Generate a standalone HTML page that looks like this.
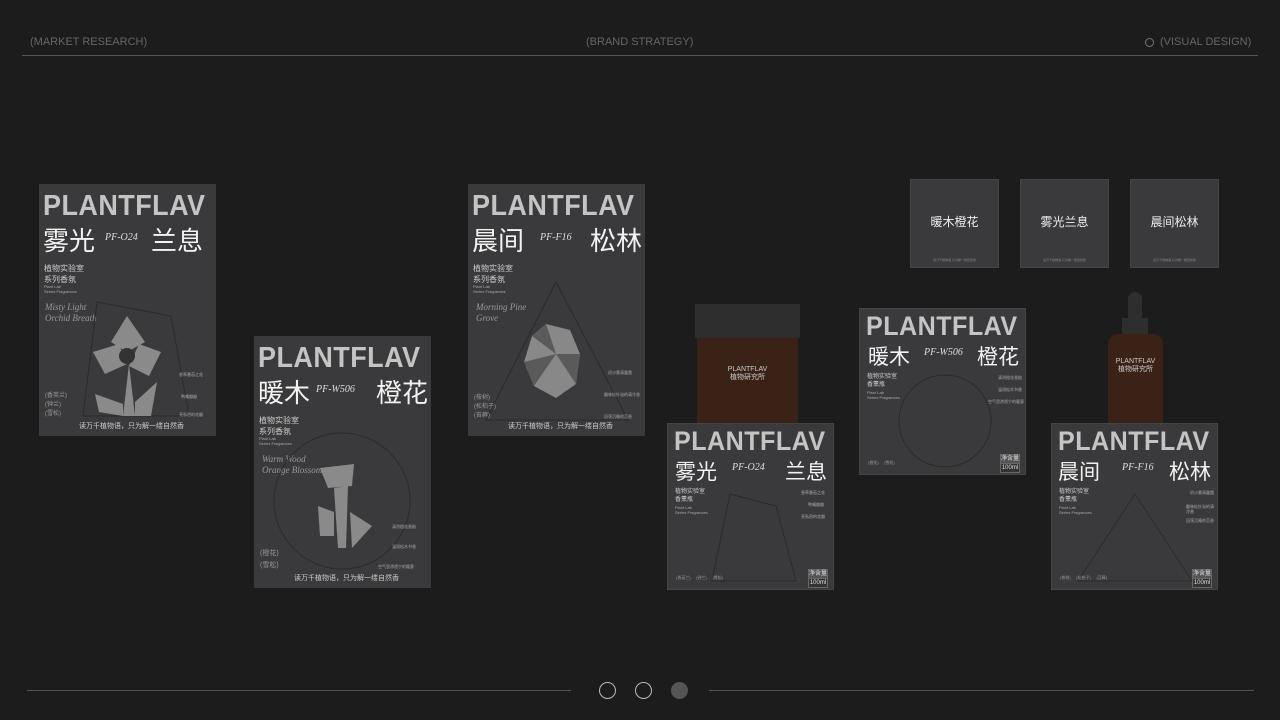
<!DOCTYPE html>
<html><head><meta charset="utf-8"><style>
*{margin:0;padding:0;box-sizing:border-box}
body{width:1280px;height:720px;background:#1c1c1c;position:relative;overflow:hidden;font-family:"Liberation Sans","Noto Sans CJK SC",sans-serif;color:#ddd}
.a{position:absolute}
.hd{top:36px;font-size:11px;color:#666}
.card{position:absolute;background:#3a3a3c;overflow:hidden}
.t{position:absolute;left:4px;top:6px;font-size:29px;color:#c4c4c4;font-weight:bold;letter-spacing:0.5px;white-space:nowrap;transform:scaleX(0.93);transform-origin:left}
.cn{position:absolute;font-size:26px;color:#f2f2f2;white-space:nowrap}
.code{position:absolute;font-family:"Liberation Serif",serif;font-style:italic;font-size:10px;color:#ddd}
.s{position:absolute;font-size:8px;color:#ccc;line-height:11px}
.xs{position:absolute;font-size:4px;color:#aaa;line-height:5px}
.g{position:absolute;font-size:6px;color:#999;line-height:9px}
.net{position:absolute;font-size:6px;color:#ddd;background:#555;text-align:center;width:20px;line-height:8px;border:1px solid #666}
.sq{position:absolute;background:#3a3a3c;width:89px;height:89px;border:1px solid #444}
.sq .c{position:absolute;top:33px;width:100%;text-align:center;font-size:12px;color:#eee}
.sq .f{position:absolute;top:78px;width:100%;text-align:center;font-size:3px;color:#888}
</style></head><body>
<div class="a hd" style="left:30px">(MARKET RESEARCH)</div>
<div class="a hd" style="left:586px">(BRAND STRATEGY)</div>
<div class="a" style="left:1145px;top:38px;width:9px;height:9px;border:1px solid #777;border-radius:50%"></div>
<div class="a hd" style="left:1160px">(VISUAL DESIGN)</div>
<div class="a" style="left:22px;top:55px;width:1236px;height:1px;background:#555"></div>

<!-- poster A -->
<div class="card" style="left:39px;top:184px;width:177px;height:252px">
<div class="t">PLANTFLAV</div>
<div class="cn" style="left:4px;top:37px">雾光</div>
<div class="code" style="left:66px;top:48px">PF-O24</div>
<div class="cn" style="left:112px;top:37px">兰息</div>
<div class="s" style="left:5px;top:79px">植物实验室<br>系列香氛</div>
<div class="xs" style="left:5px;top:100px">Plant Lab<br>Series Fragrances</div>
<div class="code" style="left:6px;top:118px;color:#999;font-size:9px;line-height:11px">Misty Light<br>Orchid Breath</div>
<svg class="a" style="left:0;top:0" width="177" height="252"><polygon points="58,118 132,132 150,232 44,232" fill="none" stroke="#2a2a2a"/>
<g fill="#8a8a8a"><polygon points="88,132 106,158 88,168 72,158"/><polygon points="54,168 80,160 88,180 66,190"/><polygon points="100,160 122,168 110,192 90,182"/><polygon points="90,180 96,232 84,232"/><polygon points="56,210 84,220 84,232 60,228"/><polygon points="96,218 118,198 112,232 96,232"/></g>
<circle cx="88" cy="172" r="8" fill="#333"/></svg>
<div class="g" style="left:6px;top:208px">(香英兰)<br>(钟兰)<br>(雪松)</div>
<div class="xs" style="left:140px;top:188px">香草番茄之花</div>
<div class="xs" style="left:142px;top:210px">鸭嘴瓣瓣</div>
<div class="xs" style="left:140px;top:228px">亮私密的花瓣</div>
<div class="s" style="left:40px;top:237px;font-size:7px">读万千植物语，只为解一缕自然香</div>
</div>

<!-- poster B -->
<div class="card" style="left:254px;top:336px;width:177px;height:252px">
<div class="t">PLANTFLAV</div>
<div class="cn" style="left:4px;top:37px">暖木</div>
<div class="code" style="left:62px;top:48px">PF-W506</div>
<div class="cn" style="left:122px;top:37px">橙花</div>
<div class="s" style="left:5px;top:79px">植物实验室<br>系列香氛</div>
<div class="xs" style="left:5px;top:100px">Plant Lab<br>Series Fragrances</div>
<div class="code" style="left:8px;top:118px;color:#999;font-size:9px;line-height:11px">Warm Wood<br>Orange Blossom</div>
<svg class="a" style="left:0;top:0" width="177" height="252"><circle cx="88" cy="165" r="68" fill="none" stroke="#2a2a2a"/>
<g fill="#8a8a8a"><polygon points="66,132 100,128 98,150 74,152"/><polygon points="80,152 94,150 92,212 84,212"/><polygon points="64,170 80,176 80,200 66,200"/><polygon points="96,176 118,190 98,212"/></g></svg>
<div class="g" style="left:6px;top:212px;font-size:7px;line-height:12px">(橙花)<br>(雪松)</div>
<div class="xs" style="left:138px;top:188px">清冽橙花香韵</div>
<div class="xs" style="left:138px;top:208px">温润松木书香</div>
<div class="xs" style="left:124px;top:228px">空气里渗透宁的暖意</div>
<div class="s" style="left:40px;top:237px;font-size:7px">读万千植物语，只为解一缕自然香</div>
</div>

<!-- poster C -->
<div class="card" style="left:468px;top:184px;width:177px;height:252px">
<div class="t">PLANTFLAV</div>
<div class="cn" style="left:4px;top:37px">晨间</div>
<div class="code" style="left:72px;top:48px">PF-F16</div>
<div class="cn" style="left:122px;top:37px">松林</div>
<div class="s" style="left:5px;top:79px">植物实验室<br>系列香氛</div>
<div class="xs" style="left:5px;top:100px">Plant Lab<br>Series Fragrances</div>
<div class="code" style="left:8px;top:118px;color:#999;font-size:9px;line-height:11px">Morning Pine<br>Grove</div>
<svg class="a" style="left:0;top:0" width="177" height="252"><polygon points="88,98 160,236 18,236" fill="none" stroke="#2a2a2a"/>
<g fill="#888"><polygon points="78,140 102,146 112,170 108,200 88,214 66,202 56,178 64,152"/></g><g fill="#5a5a5a"><polygon points="78,140 88,170 64,152"/><polygon points="88,170 112,170 108,200"/><polygon points="56,178 88,170 66,202"/></g></svg>
<div class="g" style="left:6px;top:210px">(桉树)<br>(松柏子)<br>(苔藓)</div>
<div class="xs" style="left:140px;top:186px">初沙雾清露霞</div>
<div class="xs" style="left:136px;top:208px">翻林松针溢的清冷香</div>
<div class="xs" style="left:136px;top:230px">回荡沉睡的苔香</div>
<div class="s" style="left:40px;top:237px;font-size:7px">读万千植物语，只为解一缕自然香</div>
</div>

<!-- jar -->
<div class="a" style="left:695px;top:304px;width:105px;height:34px;background:#2e2e2f"></div>
<div class="a" style="left:697px;top:338px;width:101px;height:86px;background:#3a2217">
<div style="position:absolute;top:28px;width:100%;text-align:center;font-size:7px;color:#ccc;line-height:8px">PLANTFLAV<br>植物研究所</div></div>

<!-- box O24 -->
<div class="card" style="left:667px;top:423px;width:167px;height:167px;border:1px solid #444">
<div class="t" style="font-size:27px;left:6px;top:2px">PLANTFLAV</div>
<div class="cn" style="left:7px;top:32px;font-size:21px">雾光</div>
<div class="code" style="left:64px;top:38px">PF-O24</div>
<div class="cn" style="left:117px;top:32px;font-size:21px">兰息</div>
<div class="s" style="left:7px;top:64px;font-size:6px;line-height:8px">植物实验室<br>香薰瓶</div>
<div class="xs" style="left:7px;top:81px">Plant Lab<br>Series Fragrances</div>
<svg class="a" style="left:0;top:0" width="167" height="167"><polygon points="62,70 108,82 128,157 44,157" fill="none" stroke="#2a2a2a"/></svg>
<div class="xs" style="left:133px;top:66px">香草番茄之花</div>
<div class="xs" style="left:140px;top:78px">鸭嘴瓣瓣</div>
<div class="xs" style="left:133px;top:90px">亮私密的花瓣</div>
<div class="g" style="left:8px;top:149px;font-size:4px">(香英兰)&nbsp;&nbsp;&nbsp;&nbsp;&nbsp;(钟兰)&nbsp;&nbsp;&nbsp;&nbsp;&nbsp;(雪松)</div>
<div class="net" style="left:140px;top:145px">净含量</div><div class="net" style="left:140px;top:154px;background:#333">100ml</div>
</div>

<!-- box W506 -->
<div class="card" style="left:859px;top:308px;width:167px;height:167px;border:1px solid #444">
<div class="t" style="font-size:27px;left:6px;top:2px">PLANTFLAV</div>
<div class="cn" style="left:8px;top:32px;font-size:21px">暖木</div>
<div class="code" style="left:64px;top:38px">PF-W506</div>
<div class="cn" style="left:117px;top:32px;font-size:21px">橙花</div>
<div class="s" style="left:7px;top:64px;font-size:6px;line-height:8px">植物实验室<br>香薰瓶</div>
<div class="xs" style="left:7px;top:81px">Plant Lab<br>Series Fragrances</div>
<svg class="a" style="left:0;top:0" width="167" height="167"><circle cx="85" cy="112" r="46" fill="none" stroke="#2a2a2a"/></svg>
<div class="xs" style="left:138px;top:66px">清冽橙花香韵</div>
<div class="xs" style="left:138px;top:78px">温润松木书香</div>
<div class="xs" style="left:128px;top:90px">空气里渗透宁的暖意</div>
<div class="g" style="left:8px;top:149px;font-size:4px">(橙花)&nbsp;&nbsp;&nbsp;&nbsp;&nbsp;(雪松)</div>
<div class="net" style="left:140px;top:145px">净含量</div><div class="net" style="left:140px;top:154px;background:#333">100ml</div>
</div>

<!-- squares -->
<div class="sq" style="left:910px;top:179px"><div class="c">暖木橙花</div><div class="f">读万千植物语 只为解一缕自然香</div></div>
<div class="sq" style="left:1020px;top:179px"><div class="c">雾光兰息</div><div class="f">读万千植物语 只为解一缕自然香</div></div>
<div class="sq" style="left:1130px;top:179px"><div class="c">晨间松林</div><div class="f">读万千植物语 只为解一缕自然香</div></div>

<!-- dropper -->
<div class="a" style="left:1128px;top:292px;width:14px;height:30px;background:#2e2e2f;border-radius:7px 7px 0 0"></div>
<div class="a" style="left:1122px;top:318px;width:26px;height:18px;background:#2e2e2f"></div>
<div class="a" style="left:1108px;top:334px;width:55px;height:90px;background:#3a2217;border-radius:10px 10px 0 0">
<div style="position:absolute;top:24px;width:100%;text-align:center;font-size:7px;color:#ccc;line-height:8px">PLANTFLAV<br>植物研究所</div></div>

<!-- box F16 -->
<div class="card" style="left:1051px;top:423px;width:167px;height:167px;border:1px solid #444">
<div class="t" style="font-size:27px;left:6px;top:2px">PLANTFLAV</div>
<div class="cn" style="left:6px;top:32px;font-size:21px">晨间</div>
<div class="code" style="left:70px;top:38px">PF-F16</div>
<div class="cn" style="left:117px;top:32px;font-size:21px">松林</div>
<div class="s" style="left:7px;top:64px;font-size:6px;line-height:8px">植物实验室<br>香薰瓶</div>
<div class="xs" style="left:7px;top:81px">Plant Lab<br>Series Fragrances</div>
<svg class="a" style="left:0;top:0" width="167" height="167"><polygon points="83,70 140,157 26,157" fill="none" stroke="#2a2a2a"/></svg>
<div class="xs" style="left:138px;top:66px">初沙雾清露霞</div>
<div class="xs" style="left:134px;top:80px">翻林松针溢的清冷香</div>
<div class="xs" style="left:134px;top:94px">回荡沉睡的苔香</div>
<div class="g" style="left:8px;top:149px;font-size:4px">(桉树)&nbsp;&nbsp;&nbsp;&nbsp;&nbsp;(松柏子)&nbsp;&nbsp;&nbsp;&nbsp;&nbsp;(苔藓)</div>
<div class="net" style="left:140px;top:145px">净含量</div><div class="net" style="left:140px;top:154px;background:#333">100ml</div>
</div>

<!-- footer -->
<div class="a" style="left:27px;top:690px;width:544px;height:1px;background:#555"></div>
<div class="a" style="left:709px;top:690px;width:545px;height:1px;background:#555"></div>
<div class="a" style="left:599px;top:682px;width:17px;height:17px;border:1px solid #bbb;border-radius:50%"></div>
<div class="a" style="left:635px;top:682px;width:17px;height:17px;border:1px solid #bbb;border-radius:50%"></div>
<div class="a" style="left:671px;top:682px;width:17px;height:17px;background:#555;border-radius:50%"></div>
</body></html>
